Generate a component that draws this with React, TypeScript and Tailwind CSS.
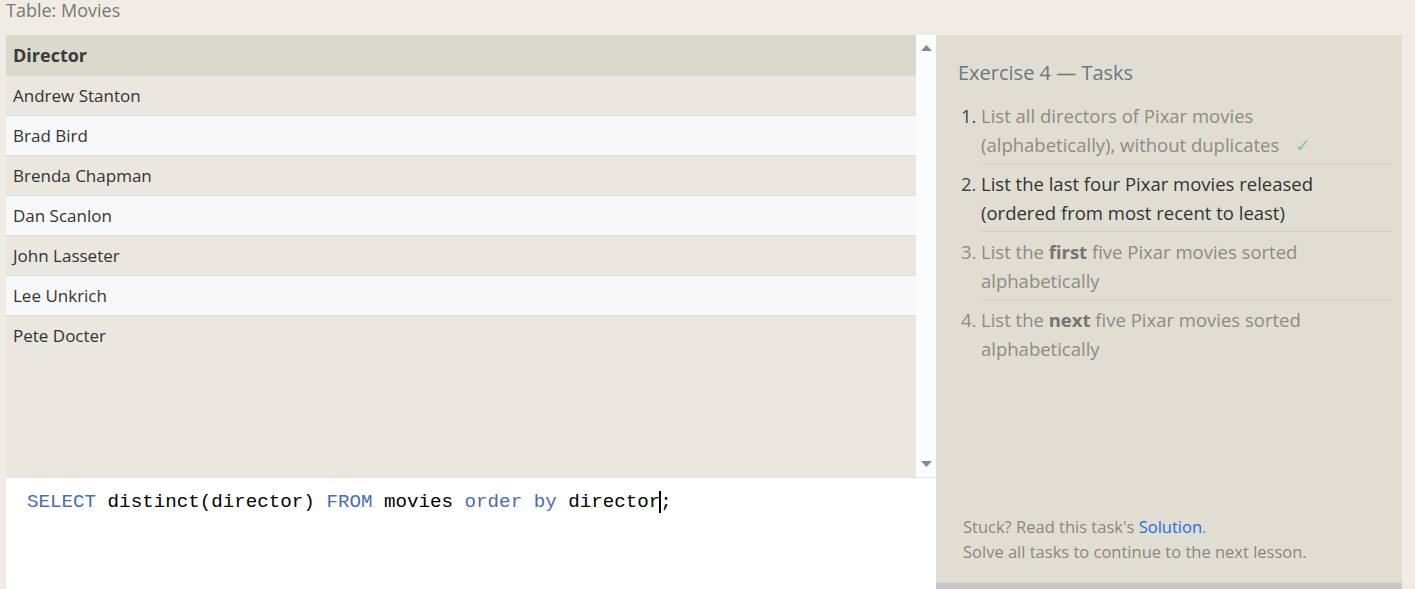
const DIRECTORS = [
  "Andrew Stanton",
  "Brad Bird",
  "Brenda Chapman",
  "Dan Scanlon",
  "John Lasseter",
  "Lee Unkrich",
  "Pete Docter",
];

const sans = "font-['Open_Sans',_'Noto_Sans',_sans-serif]";

function Task({ n, state, children }: { n: number; state: "done" | "current" | "todo"; children: React.ReactNode }) {
  const textColor = state === "current" ? "text-[#333333]" : "text-[#8e8b85]";
  const numColor = state === "todo" ? "text-[#8e8b85]" : "text-[#444444]";
  return (
    <li className="flex">
      <span className={`w-[20px] shrink-0 ${numColor}`}>{n}.</span>
      <div className={`flex-1 ${textColor} ${n < 4 ? "border-b border-[#d3d0c6]" : ""} pb-[4px] mb-[5px]`}>
        {children}
      </div>
    </li>
  );
}

export default function App() {
  return (
    <div className={`w-[1415px] h-[589px] overflow-hidden bg-[#efece5] ${sans}`}>
      <div className="h-[35px] pl-[6px] text-[18px] leading-[20px] text-[#7b7873]">Table: Movies</div>

      <div className="flex pl-[6px]">
        {/* left: result table + editor */}
        <div className="w-[930px] flex flex-col">
          <div className="flex h-[443px] border-b border-[#e3e3e3]">
            <div className="w-[910px] bg-[#e9e7e0]">
              <div className="h-[41px] bg-[#dad9cd] px-[7px] flex items-center text-[18px] font-bold text-[#3b3b3b]">
                Director
              </div>
              {DIRECTORS.map((d, i) => (
                <div
                  key={d}
                  className={`h-[40px] px-[7px] flex items-center text-[17px] text-[#333333] ${
                    i % 2 === 0 ? "bg-[#e9e7e0]" : "bg-[#f8f8f8]"
                  } ${i < DIRECTORS.length - 1 ? "border-b border-[#dedcd6]" : ""}`}
                >
                  {d}
                </div>
              ))}
            </div>
            <div className="w-[20px] bg-[#fcfcfc] flex flex-col items-center justify-between pt-[10px] pb-[10px]">
              <svg width="11" height="6" viewBox="0 0 11 6"><path d="M5.5 0 L11 6 L0 6 Z" fill="#8a8a8a" /></svg>
              <svg width="11" height="6" viewBox="0 0 11 6"><path d="M0 0 L11 0 L5.5 6 Z" fill="#8a8a8a" /></svg>
            </div>
          </div>
          <div className="h-[111px] bg-white pl-[21px] pt-[12px] font-['Liberation_Mono',_monospace] text-[19.2px] leading-[24px] text-black whitespace-pre">
            <span className="text-[#4a6cb3]">SELECT</span> distinct(director) <span className="text-[#4a6cb3]">FROM</span> movies{" "}
            <span className="text-[#4a6cb3]">order by</span> director
            <span className="inline-block w-[2px] h-[22px] bg-black align-middle -mx-[1px]" />;
          </div>
        </div>

        {/* right: tasks */}
        <div className="w-[466px] h-[554px] flex flex-col">
          <div className="flex-1 bg-[#e0ded3] pl-[22px] pr-[10px] pt-[25px] flex flex-col">
            <h2 className="text-[20px] leading-[26px] text-[#6f7582]">Exercise 4 — Tasks</h2>
            <ol className="mt-[15px] ml-[3px] text-[18.5px] leading-[29px]">
              <Task n={1} state="done">
                List all directors of Pixar movies (alphabetically), without duplicates
                <span className="ml-[16px] text-[#7fcf8c]">✓</span>
              </Task>
              <Task n={2} state="current">
                List the last four Pixar movies released (ordered from most recent to least)
              </Task>
              <Task n={3} state="todo">
                List the <b className="text-[#77746f]">first</b> five Pixar movies sorted alphabetically
              </Task>
              <Task n={4} state="todo">
                List the <b className="text-[#77746f]">next</b> five Pixar movies sorted alphabetically
              </Task>
            </ol>
            <div className="mt-auto mb-[19px] pl-[5px] text-[16.5px] leading-[25px] text-[#8b8680]">
              <p>
                Stuck? Read this task's <a className="text-[#1a6fe0]">Solution</a>.
              </p>
              <p>Solve all tasks to continue to the next lesson.</p>
            </div>
          </div>
          <div className="h-[6px] bg-[#c7c7c7]" />
        </div>
      </div>
    </div>
  );
}
